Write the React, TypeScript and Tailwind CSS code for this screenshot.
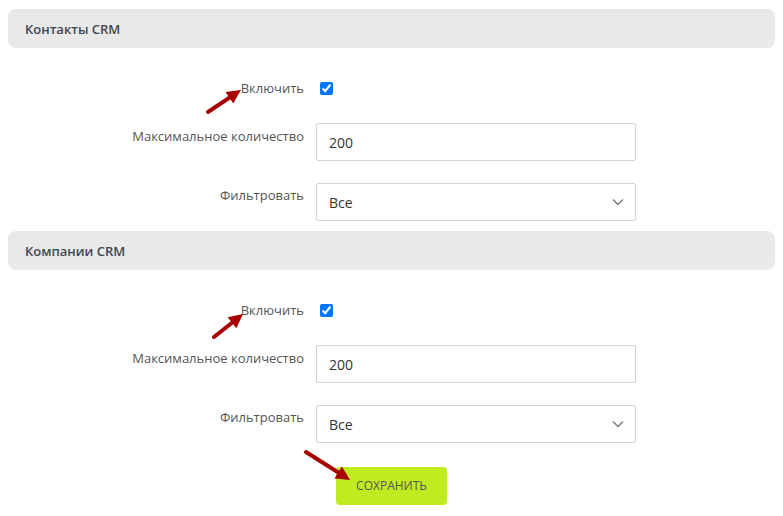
import React from 'react';

function Arrow({ x1, y1, x2, y2 }: { x1: number; y1: number; x2: number; y2: number }) {
  // red pointer arrow drawn over the form
  const ang = Math.atan2(y2 - y1, x2 - x1);
  const len = 14;
  const w = 7;
  const bx = x2 - Math.cos(ang) * len;
  const by = y2 - Math.sin(ang) * len;
  const px = -Math.sin(ang) * w;
  const py = Math.cos(ang) * w;
  return (
    <g>
      <line x1={x1} y1={y1} x2={bx + Math.cos(ang) * 2} y2={by + Math.sin(ang) * 2} stroke="#a80000" strokeWidth={4} strokeLinecap="round" />
      <polygon points={`${x2},${y2} ${bx + px},${by + py} ${bx - px},${by - py}`} fill="#a80000" />
    </g>
  );
}

function Section({ title }: { title: string }) {
  return (
    <>
      <div className="mx-2 h-[39px] flex items-center px-[17px] pt-[2px] rounded-lg bg-[#e9e9e9] text-[13px] font-semibold text-[#3d4752]">
        {title}
      </div>
      <div className="flex items-center h-[26px] mt-[27px]">
        <div className="w-[304px] text-right text-[13px] text-[#555] pt-[2px]">Включить</div>
        <div className="pl-[16px] flex items-center">
          <input type="checkbox" defaultChecked className="w-[13px] h-[13px] m-0 accent-[#0075ff]" />
        </div>
      </div>
      <div className="flex mt-[22px]">
        <div className="w-[304px] text-right text-[13px] text-[#555] pt-[4px]">Максимальное количество</div>
        <div className="pl-[12px]">
          <div className="w-[320px] h-[38px] border border-[#d4d4d4] rounded-[2px] flex items-center px-[12px] text-[14px] text-[#333]">
            200
          </div>
        </div>
      </div>
      <div className="flex mt-[22px]">
        <div className="w-[304px] text-right text-[13px] text-[#555] pt-[3px]">Фильтровать</div>
        <div className="pl-[12px]">
          <div className="w-[320px] h-[38px] border border-[#d4d4d4] rounded-[2px] flex items-center justify-between pl-[12px] pr-[11px] text-[14px] text-[#333]">
            <span>Все</span>
            <svg width="12" height="8" viewBox="0 0 12 8" fill="none">
              <path d="M1 1.5 L6 6.5 L11 1.5" stroke="#777" strokeWidth="1.4" />
            </svg>
          </div>
        </div>
      </div>
    </>
  );
}

export default function App() {
  return (
    <div className="relative w-[783px] h-[516px] bg-white font-['Open_Sans',sans-serif] overflow-hidden">
      <div className="pt-[9px] flex flex-col">
        <Section title="Контакты CRM" />
        <div className="mt-[10px]" />
        <Section title="Компании CRM" />
        <div className="flex justify-center mt-[24px]">
          <button className="w-[111px] h-[38px] rounded-[4px] bg-[#c1eb21] text-[12px] text-[#555] uppercase">
            Сохранить
          </button>
        </div>
      </div>
      <svg className="absolute inset-0 pointer-events-none" width="783" height="516">
        <Arrow x1={208} y1={112} x2={241} y2={90} />
        <Arrow x1={214} y1={337} x2={243} y2={314} />
        <Arrow x1={306} y1={452} x2={350} y2={480} />
      </svg>
    </div>
  );
}
